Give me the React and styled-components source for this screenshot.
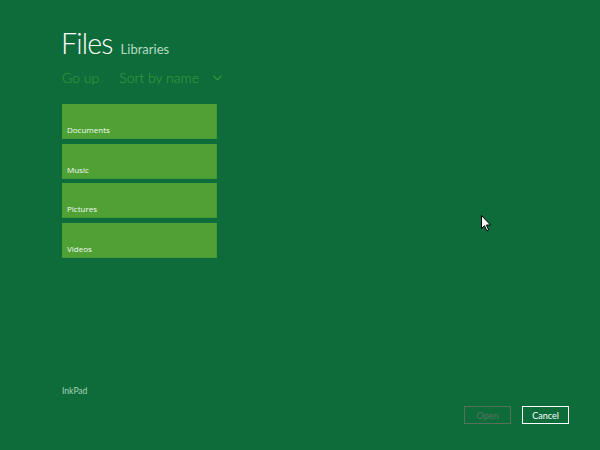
import React from 'react'
import styled, { createGlobalStyle } from 'styled-components'

const GlobalStyle = createGlobalStyle`
    html, body{
        margin: 0;
        padding: 0;
        background: #0e6c3b;
    }
`

const libraries = ['Documents', 'Music', 'Pictures', 'Videos'];

function App() {
    return (
        <>
            <GlobalStyle />
            <Wrapper>
                <header className="title">
                    <h1>Files</h1>
                    <span className="crumb">Libraries</span>
                </header>
                <nav className="commands">
                    <Command>Go up</Command>
                    <Command gap="14px">
                        Sort by name
                        <svg width="9" height="6" viewBox="0 0 9 6">
                            <path d="M0.5 0.8 L4.5 4.8 L8.5 0.8" fill="none" stroke="#3b9f3a" strokeWidth="1.1" />
                        </svg>
                    </Command>
                </nav>
                <section className="tiles">
                    {libraries.map((name) => (
                        <Tile key={name}>{name}</Tile>
                    ))}
                </section>
                <footer className="footer">
                    <p className="app">InkPad</p>
                    <div className="buttons">
                        <Button disabled>Open</Button>
                        <Button>Cancel</Button>
                    </div>
                </footer>
                <Cursor width="12" height="18" viewBox="0 0 12 18">
                    <path d="M0.5 0.5 L0.5 13.5 L3.5 10.7 L5.8 15.8 L7.6 15 L5.4 10 L9.5 10 Z" fill="#fff" stroke="#000" strokeWidth="1" />
                </Cursor>
            </Wrapper>
        </>
    )
}

const Wrapper = styled.div`
    position: relative;
    width: 600px;
    height: 450px;
    box-sizing: border-box;
    padding: 25px 31px 26px 62px;
    display: flex;
    flex-direction: column;
    font-family: Lato, "Open Sans", "Liberation Sans", sans-serif;
    overflow: hidden;

    .title{
        display: flex;
        align-items: baseline;
        gap: 8px;
        margin-left: -1px;
        h1{
            margin: 0;
            font-size: 28.5px;
            font-weight: 300;
            color: #fff;
            line-height: 36px;
            letter-spacing: -0.8px;
        }
    }
    .crumb{
        font-size: 13px;
        font-weight: 400;
        color: #b7dcc3;
    }
    .commands{
        display: flex;
        gap: 20px;
        margin-top: 4px;
        height: 24px;
        align-items: center;
    }
    .tiles{
        margin-top: 15px;
        display: flex;
        flex-direction: column;
        gap: 4.5px;
        width: 155px;
    }
    .footer{
        margin-top: auto;
        display: flex;
        justify-content: space-between;
        align-items: flex-end;
    }
    .app{
        margin: 0 0 28px;
        font-size: 8.5px;
        color: #a7d3b3;
    }
    .buttons{
        display: flex;
        gap: 11px;
    }
`

const Command = styled.span`
    display: flex;
    align-items: center;
    gap: ${(p) => p.gap || '0'};
    font-size: 14px;
    font-weight: 300;
    color: #3b9f3a;
    svg{
        margin-top: 2px;
    }
`

const Tile = styled.div`
    height: 35px;
    box-sizing: border-box;
    padding: 0 0 3px 5px;
    display: flex;
    align-items: flex-end;
    background-color: #4fa136;
    border-right: 1px solid #469a35;
    border-bottom: 1px solid #469a35;
    font-family: "Open Sans", "Liberation Sans", sans-serif;
    font-size: 8px;
    color: #f4fbf4;
`

const Button = styled.button`
    width: 47px;
    height: 18px;
    padding: 0;
    box-sizing: border-box;
    background: transparent;
    border: 1.5px solid #fff;
    color: #fff;
    font-family: Lato, "Open Sans", "Liberation Sans", sans-serif;
    font-size: 9px;
    &:disabled{
        border: 1px solid #56705c;
        color: #5a7360;
    }
`

const Cursor = styled.svg`
    position: absolute;
    left: 481px;
    top: 215px;
`

export default App
